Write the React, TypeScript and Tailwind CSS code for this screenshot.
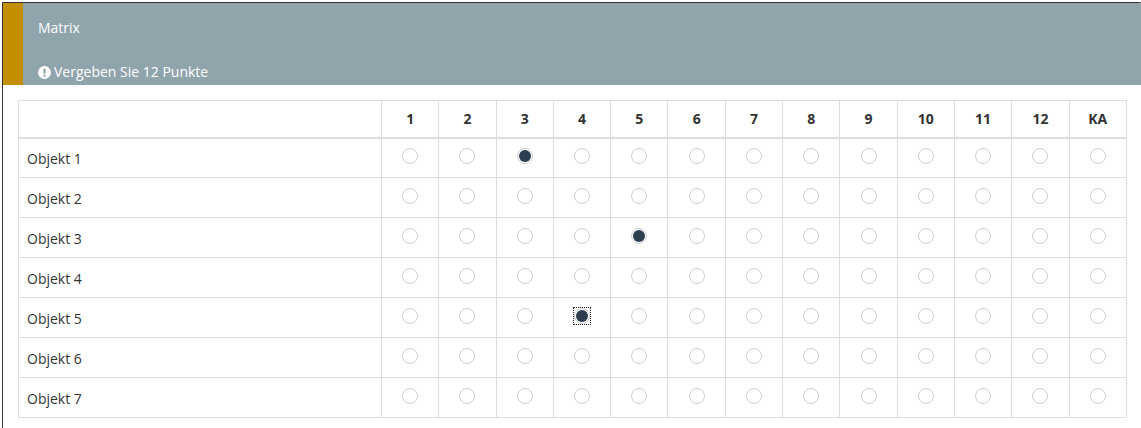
import React from "react";

const COLS = ["1", "2", "3", "4", "5", "6", "7", "8", "9", "10", "11", "12", "KA"];

// row index -> selected column index
const ROWS: { label: string; selected?: number; focused?: boolean }[] = [
  { label: "Objekt 1", selected: 2 },
  { label: "Objekt 2" },
  { label: "Objekt 3", selected: 4 },
  { label: "Objekt 4" },
  { label: "Objekt 5", selected: 3, focused: true },
  { label: "Objekt 6" },
  { label: "Objekt 7" },
];

function Radio({ checked, focused }: { checked?: boolean; focused?: boolean }) {
  return (
    <span
      className={`inline-flex items-center justify-center ${
        focused ? "outline outline-1 outline-dotted outline-[#222] outline-offset-0" : ""
      }`}
    >
      <span className="w-[16px] h-[16px] rounded-full border border-[#cfcfcf] bg-white flex items-center justify-center">
        {checked && <span className="w-[12px] h-[12px] rounded-full bg-[#2c3e50]" />}
      </span>
    </span>
  );
}

export default function App() {
  return (
    <div
      className="w-[1141px] h-[428px] overflow-hidden bg-white"
      style={{ fontFamily: '"Open Sans", "Noto Sans", sans-serif' }}
    >
      <div className="ml-[2px] mt-[2px] w-[1142px] h-[440px] border border-[#333] rounded-tr-[5px] overflow-hidden">
        {/* Header band */}
        <div className="flex h-[82px] bg-[#90a4ac]">
          <div className="w-[20px] bg-[#c48e00] shrink-0" />
          <div className="pl-[15px] flex flex-col text-white text-[14px]">
            <div className="h-[20px] leading-[20px] mt-[15px]">Matrix</div>
            <div className="h-[20px] leading-[20px] mt-[24px] flex items-center gap-[3px]">
              <svg width="13" height="13" viewBox="0 0 16 16" className="shrink-0">
                <circle cx="8" cy="8" r="8" fill="#fff" />
                <rect x="6.7" y="3" width="2.6" height="6.5" rx="1" fill="#90a4ac" />
                <circle cx="8" cy="12" r="1.4" fill="#90a4ac" />
              </svg>
              <span>Vergeben Sie 12 Punkte</span>
            </div>
          </div>
        </div>

        {/* Body */}
        <div className="pt-[15px] pl-[15px]">
          <table className="w-[1109px] border-collapse text-[14px] text-[#333] table-fixed">
            <colgroup>
              <col className="w-[363px]" />
              {COLS.map((c) => (
                <col key={c} />
              ))}
            </colgroup>
            <thead>
              <tr className="h-[37px]">
                <th className="border border-b-2 border-[#ddd]" />
                {COLS.map((c) => (
                  <th key={c} className="border border-b-2 border-[#ddd] font-bold text-[14px] text-center">
                    {c}
                  </th>
                ))}
              </tr>
            </thead>
            <tbody>
              {ROWS.map((r) => (
                <tr key={r.label} className="h-[40px]">
                  <td className="border border-[#ddd] pl-[8px] pt-[1px]">{r.label}</td>
                  {COLS.map((c, i) => (
                    <td key={c} className="border border-[#ddd] text-center align-middle">
                      <div className="flex items-center justify-center -mt-[3px]">
                        <Radio checked={r.selected === i} focused={r.focused && r.selected === i} />
                      </div>
                    </td>
                  ))}
                </tr>
              ))}
            </tbody>
          </table>
        </div>
      </div>
    </div>
  );
}
